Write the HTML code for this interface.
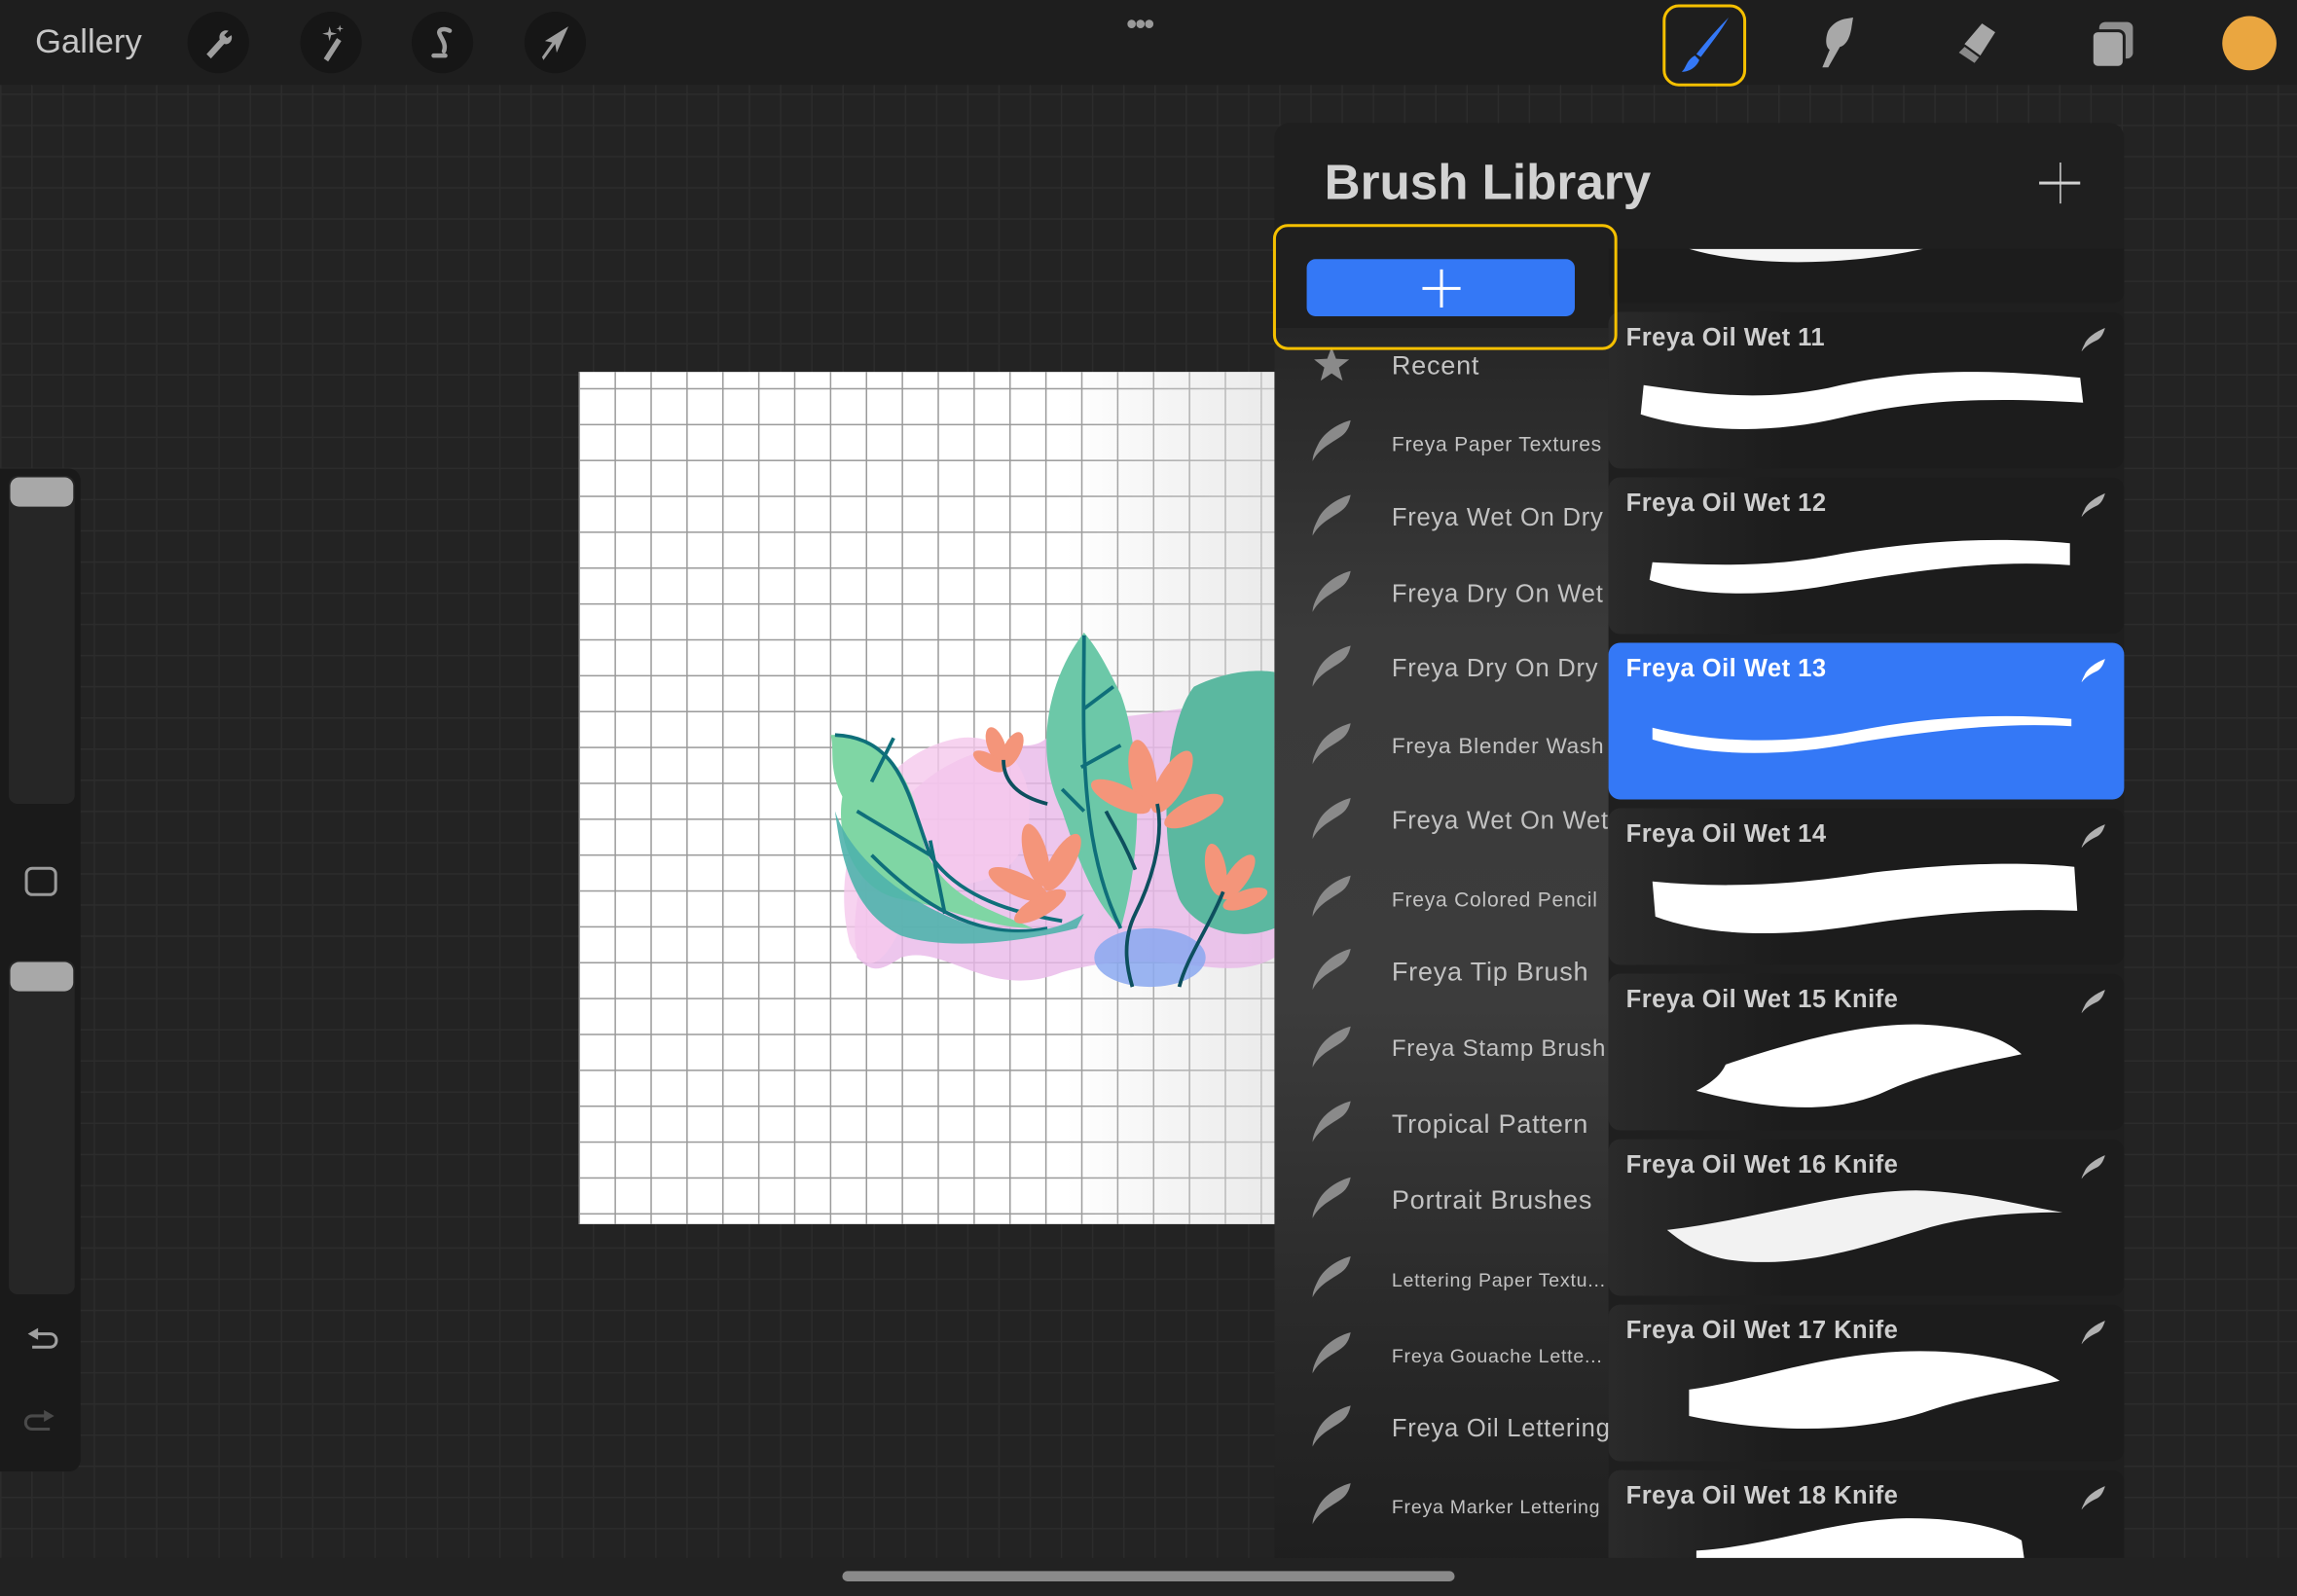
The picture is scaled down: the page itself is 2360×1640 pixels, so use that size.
<!DOCTYPE html>
<html><head><meta charset="utf-8"><style>
*{margin:0;padding:0;box-sizing:border-box}
html,body{width:2360px;height:1640px;overflow:hidden;background:#232323}
#w{position:absolute;left:0;top:0;width:1568px;height:1090px;transform:scale(1.50510,1.50459);transform-origin:0 0;font-family:"Liberation Sans",sans-serif;
background-color:#232323;background-image:linear-gradient(#2c2c2c 1px,transparent 1px),linear-gradient(90deg,#2c2c2c 1px,transparent 1px);background-size:21.3px 21.3px;overflow:hidden}
.a{position:absolute}
#top{left:0;top:0;width:1568px;height:58px;background:#1e1e1e}
.circ{width:42px;height:42px;border-radius:50%;background:#161616;top:8px}
#canvas{left:395px;top:254px;width:475px;height:582px;background-color:#fff;
background-image:linear-gradient(90deg,rgba(255,255,255,0) 70%,rgba(220,220,220,.6)),linear-gradient(#9a9a9a 1px,transparent 1px),linear-gradient(90deg,#9a9a9a 1px,transparent 1px);background-size:100% 100%,24.5px 24.5px,24.5px 24.5px;background-position:0 0,0 11px,0 0}
#side{left:0;top:320px;width:55px;height:685px;background:#1a1a1a;border-radius:0 8px 8px 0}
.track{left:6px;width:45px;background:#262626;border-radius:6px}
.thumb{left:7px;width:43px;height:20px;background:#a8a8a8;border-radius:6px}
#panel{left:870px;top:84px;width:580px;height:980px;background:#1f1f1f;border-radius:10px 10px 0 0;overflow:hidden}
#list{left:0;top:140px;width:228px;height:840px;background:linear-gradient(180deg,#262626 0%,#3a3a3a 25%,#3c3c3c 55%,#2a2a2a 80%,#1f1f1f 100%)}
.li{position:absolute;left:80px;color:#c2c2c2;white-space:nowrap;transform:translateY(-50%);letter-spacing:.5px}
.card{position:absolute;left:228px;width:352px;height:107px;border-radius:8px;background:linear-gradient(90deg,#2a2a2a,#1c1c1c 35%,#1c1c1c)}
.card .t{position:absolute;left:12px;top:8px;font-weight:bold;font-size:17px;color:#cfcfcf;letter-spacing:.3px}
.card .f{position:absolute;right:12px;top:10px;width:18px;height:18px}
.card svg.s{position:absolute;left:0;top:0}
</style></head><body><div id="w">
<div id="top" class="a">
 <div class="a" style="left:24px;top:15px;font-size:23px;color:#c6c6c6">Gallery</div>
 <div class="a circ" style="left:128px"></div><div class="a circ" style="left:205px"></div><div class="a circ" style="left:281px"></div><div class="a circ" style="left:358px"></div>
 <svg class="a" style="left:128px;top:8px" width="42" height="42"><path d="M28 13 C24 12 21 15 22 19 L13 29 L16 32 L25 22 C29 23 31 19 30 16 L27 18 L25 16 Z" fill="#9e9e9e"/></svg>
 <svg class="a" style="left:205px;top:8px" width="42" height="42"><path d="M25 18 L28 20 L19 34 L16 32 Z" fill="#9e9e9e"/><path d="M20 10 L21 14 L25 15 L21 16 L20 20 L19 16 L15 15 L19 14Z M27 9 L27.6 11 L29.5 11.5 L27.6 12 L27 14 L26.4 12 L24.5 11.5 L26.4 11Z" fill="#9e9e9e"/></svg>
 <svg class="a" style="left:281px;top:8px" width="42" height="42"><path d="M26 13 C22 11 18 12 19 15 C20 18 24 22 22 27 M15 30 L23 30" stroke="#9e9e9e" stroke-width="3" fill="none" stroke-linecap="round"/></svg>
 <svg class="a" style="left:358px;top:8px" width="42" height="42"><path d="M30 10 L22 28 L21 22 L13 33 L12 31 L19 21 L14 20 Z" fill="#9e9e9e"/></svg>
 <div class="a" style="left:769px;top:6px;font-size:20px;color:#9a9a9a;letter-spacing:-1px;font-weight:bold">•••</div>
 <div class="a" style="left:1135px;top:3px;width:57px;height:56px;border:2.5px solid #f5c000;border-radius:11px"></div>
 <svg class="a" style="left:1135px;top:3px" width="57" height="56"><path d="M45 9 C40 18 32 28 26 36 L23 34 C30 25 38 16 45 9Z" fill="#3478f6"/><path d="M22 35 L25 38 C23 43 18 46 13 46 C16 44 16 38 22 35Z" fill="#3478f6"/></svg>
 <svg class="a" style="left:1232px;top:8px" width="50" height="44"><path d="M27 5 L33 4 L32 10 C31 18 28 23 24 24 L16 38 L12 38 L17 26 C14 24 14 18 16 13 C19 8 23 6 27 5Z" fill="#a8a8a8"/></svg>
 <svg class="a" style="left:1326px;top:8px" width="50" height="44"><path d="M22 36 L10 28 L27 8 L36 14 Z" fill="#a8a8a8"/><path d="M10 28 L15 23 L26 31 L22 36Z" fill="#8a8a8a" stroke="#1e1e1e" stroke-width="1.5"/></svg>
 <svg class="a" style="left:1420px;top:8px" width="50" height="44"><rect x="13" y="7" width="23" height="25" rx="4" fill="#8e8e8e"/><rect x="8" y="13" width="22" height="25" rx="4" fill="#a8a8a8" stroke="#1e1e1e" stroke-width="2"/></svg>
 <div class="a" style="left:1517px;top:11px;width:37px;height:37px;border-radius:50%;background:#eaa640"></div>
</div>

<div id="side" class="a">
 <div class="a track" style="top:5px;height:224px"></div><div class="a thumb" style="top:6px"></div>
 <div class="a" style="left:17px;top:272px;width:22px;height:20px;border:2px solid #9a9a9a;border-radius:5px"></div>
 <div class="a track" style="top:336px;height:228px"></div><div class="a thumb" style="top:337px"></div>
 <svg class="a" style="left:14px;top:584px" width="28" height="24"><path d="M5 7 L12 3 L12 11 Z" fill="#a0a0a0"/><path d="M11 7 L20 7 C26 7 26 16 20 16 L8 16" stroke="#a0a0a0" stroke-width="2" fill="none"/></svg>
 <svg class="a" style="left:14px;top:640px" width="28" height="24"><path d="M23 7 L16 3 L16 11 Z" fill="#4a4a4a"/><path d="M17 7 L8 7 C2 7 2 16 8 16 L20 16" stroke="#4a4a4a" stroke-width="2" fill="none"/></svg>
</div>

<div id="canvas" class="a">
<svg width="475" height="582" style="position:absolute;left:0;top:0">
 <path d="M190 400 C180 340 220 260 300 255 C330 258 320 230 350 235 C380 240 430 220 475 230 L475 400 C440 420 400 390 330 410 C280 430 250 390 220 400 C205 410 200 410 190 400Z" fill="#e8b8e8" opacity=".8"/>
 <path d="M185 390 C170 330 200 260 260 250 C300 245 320 290 300 330 C280 360 240 340 220 380 C205 410 195 410 185 390Z" fill="#f5c8ec" opacity=".8"/>
 <path d="M172 248 C210 245 230 280 235 320 C245 360 290 370 310 380 C280 380 250 365 220 360 C190 355 175 320 180 290 C170 270 175 258 172 248Z" fill="#7fd6a4"/>
 <path d="M175 248 C220 250 225 290 240 330 C260 360 300 370 330 375 M200 280 L215 250 M190 300 L240 330" stroke="#0f6f7a" stroke-width="2.5" fill="none"/>
 <path d="M345 178 C320 210 310 260 330 300 C340 330 350 360 370 380 C385 330 385 260 370 220 C360 200 355 190 345 178Z" fill="#6cc8a8"/>
 <path d="M345 180 C345 240 340 320 370 380 M345 230 L365 215 M343 270 L370 255 M345 300 L330 285" stroke="#0f6f7a" stroke-width="2.5" fill="none"/>
 <path d="M420 215 C450 200 475 205 475 205 L475 380 C450 390 420 380 410 360 C395 320 400 240 420 215Z" fill="#5bb8a0"/>
 <path d="M200 330 C230 360 270 390 320 380 M240 320 L250 370" stroke="#0f6f7a" stroke-width="2.5" fill="none"/>
 <path d="M175 300 C185 330 220 360 260 375 C300 390 330 380 345 370 L340 380 C300 390 250 395 220 385 C190 370 180 340 175 300Z" fill="#4fb3ac" opacity=".9"/>
 <ellipse cx="390" cy="400" rx="38" ry="20" fill="#8aa8f0" opacity=".85"/>
 <g fill="#f4957a">
  <ellipse cx="285" cy="255" rx="6" ry="13" transform="rotate(-20 285 255)"/><ellipse cx="296" cy="258" rx="6" ry="13" transform="rotate(25 296 258)"/><ellipse cx="280" cy="266" rx="5" ry="12" transform="rotate(-60 280 266)"/>
  <ellipse cx="312" cy="330" rx="8" ry="22" transform="rotate(-15 312 330)"/><ellipse cx="330" cy="335" rx="8" ry="22" transform="rotate(30 330 335)"/><ellipse cx="300" cy="350" rx="8" ry="22" transform="rotate(-65 300 350)"/><ellipse cx="315" cy="365" rx="7" ry="20" transform="rotate(-120 315 365)"/>
  <ellipse cx="385" cy="275" rx="9" ry="24" transform="rotate(-10 385 275)"/><ellipse cx="405" cy="280" rx="9" ry="24" transform="rotate(30 405 280)"/><ellipse cx="370" cy="290" rx="8" ry="22" transform="rotate(-65 370 290)"/><ellipse cx="420" cy="300" rx="8" ry="22" transform="rotate(65 420 300)"/>
  <ellipse cx="435" cy="340" rx="7" ry="18" transform="rotate(-10 435 340)"/><ellipse cx="450" cy="345" rx="7" ry="18" transform="rotate(35 450 345)"/><ellipse cx="455" cy="360" rx="6" ry="16" transform="rotate(70 455 360)"/>
 </g>
 <path d="M395 295 C400 320 390 350 380 370 C370 390 375 410 378 420 M380 340 C372 320 365 310 360 300 M440 355 C430 380 415 400 410 420 M290 265 C290 280 300 290 320 295" stroke="#0d4f5e" stroke-width="2.5" fill="none"/>
</svg>
</div>

<div id="panel" class="a">
 <div id="list" class="a">
  <svg class="a" style="left:26px;top:12px" width="26" height="26"><path d="M13 1 L16 9 L25 9.5 L18 15 L20.5 24 L13 19 L5.5 24 L8 15 L1 9.5 L10 9 Z" fill="#8a8a8a"/></svg>
 </div>
 <div class="card" style="top:86px;height:37px;border-radius:0 0 8px 8px;background:#1c1c1c">
  <svg class="s" width="352" height="37"><path d="M55 0 C95 12 160 12 215 0 Z" fill="#f5f5f5"/></svg>
 </div>
 <div class="a" style="left:34px;top:22px;font-size:34px;font-weight:bold;color:#d2d2d2">Brush Library</div>
 <div class="a" style="left:522px;top:40px;width:28px;height:1.5px;background:#d0d0d0"></div>
 <div class="a" style="left:535.5px;top:27px;width:1.5px;height:28px;background:#d0d0d0"></div>
</div>

<div class="a" style="left:870px;top:0;width:228px;height:1090px">
 <div class="li" style="top:250px;font-size:18px">Recent</div>
 <div class="li" style="top:303px;font-size:14px">Freya Paper Textures</div>
 <div class="li" style="top:354px;font-size:17px">Freya Wet On Dry</div>
 <div class="li" style="top:406px;font-size:17px">Freya Dry On Wet</div>
 <div class="li" style="top:457px;font-size:17px">Freya Dry On Dry</div>
 <div class="li" style="top:510px;font-size:15px">Freya Blender Wash</div>
 <div class="li" style="top:561px;font-size:17px">Freya Wet On Wet</div>
 <div class="li" style="top:614px;font-size:14px">Freya Colored Pencil</div>
 <div class="li" style="top:664px;font-size:18px">Freya Tip Brush</div>
 <div class="li" style="top:717px;font-size:16px">Freya Stamp Brush</div>
 <div class="li" style="top:768px;font-size:18px">Tropical Pattern</div>
 <div class="li" style="top:820px;font-size:18px">Portrait Brushes</div>
 <div class="li" style="top:874px;font-size:13px">Lettering Paper Textu...</div>
 <div class="li" style="top:926px;font-size:13px">Freya Gouache Lette...</div>
 <div class="li" style="top:976px;font-size:17px">Freya Oil Lettering</div>
 <div class="li" style="top:1029px;font-size:13px">Freya Marker Lettering</div>
 <svg width="60" height="1090" style="position:absolute;left:0;top:0">
  <defs><path id="fth" d="M28 2 C20 4 10 10 6 18 C4 22 2 26 2 30 C6 22 14 18 20 14 C25 11 27 7 28 2Z" fill="#8a8a8a"/></defs>
  <use href="#fth" x="24" y="285"/><use href="#fth" x="24" y="336"/><use href="#fth" x="24" y="388"/><use href="#fth" x="24" y="439"/><use href="#fth" x="24" y="492"/><use href="#fth" x="24" y="543"/><use href="#fth" x="24" y="596"/><use href="#fth" x="24" y="646"/><use href="#fth" x="24" y="699"/><use href="#fth" x="24" y="750"/><use href="#fth" x="24" y="802"/><use href="#fth" x="24" y="856"/><use href="#fth" x="24" y="908"/><use href="#fth" x="24" y="958"/><use href="#fth" x="24" y="1011"/>
 </svg>
</div>

<div class="a" style="left:870px;top:0;width:580px;height:1090px">
 <svg width="0" height="0" style="position:absolute"><defs><path id="ff" d="M17 1 C12 3 5 7 3 12 C2 14 1 16 1 17 C4 13 8 11 12 9 C15 7 16 4 17 1Z"/></defs></svg>
 <div class="card" style="top:213px"><div class="t">Freya Oil Wet 11</div><svg class="f"><use href="#ff" fill="#b0b0b0"/></svg>
  <svg class="s" width="352" height="107"><path d="M24 50 C60 55 100 62 150 52 C200 40 250 38 322 45 L324 62 C260 58 210 60 160 72 C110 84 60 82 22 70Z" fill="#fff"/></svg></div>
 <div class="card" style="top:326px"><div class="t">Freya Oil Wet 12</div><svg class="f"><use href="#ff" fill="#b0b0b0"/></svg>
  <svg class="s" width="352" height="107"><path d="M30 58 C70 60 110 62 160 52 C210 44 260 40 315 45 L315 60 C260 56 210 64 160 72 C110 82 60 82 28 70Z" fill="#fff"/></svg></div>
 <div class="card" style="top:439px;background:#3478f6"><div class="t" style="color:#fff">Freya Oil Wet 13</div><svg class="f"><use href="#ff" fill="#fff"/></svg>
  <svg class="s" width="352" height="107"><path d="M30 58 C70 68 120 70 170 60 C220 50 270 48 316 52 L316 57 C270 54 220 60 170 68 C120 78 70 78 30 66Z" fill="#fff"/></svg></div>
 <div class="card" style="top:552px"><div class="t">Freya Oil Wet 14</div><svg class="f"><use href="#ff" fill="#b0b0b0"/></svg>
  <svg class="s" width="352" height="107"><path d="M30 50 C80 55 130 52 180 44 C230 38 280 36 318 40 L320 70 C270 68 220 72 170 80 C120 88 70 88 32 74 Z" fill="#fff"/></svg></div>
 <div class="card" style="top:665px"><div class="t">Freya Oil Wet 15 Knife</div><svg class="f"><use href="#ff" fill="#b0b0b0"/></svg>
  <svg class="s" width="352" height="107"><path d="M80 62 C130 45 180 32 220 35 C250 37 270 44 282 55 C260 60 220 66 190 80 C160 94 120 96 60 80 C75 72 78 66 80 62Z" fill="#fff"/></svg></div>
 <div class="card" style="top:778px"><div class="t">Freya Oil Wet 16 Knife</div><svg class="f"><use href="#ff" fill="#b0b0b0"/></svg>
  <svg class="s" width="352" height="107"><path d="M40 62 C100 55 160 35 210 35 C250 36 280 45 310 50 C280 50 250 52 220 60 C180 72 130 90 80 82 C60 78 50 70 40 62Z" fill="#f2f2f2"/></svg></div>
 <div class="card" style="top:891px"><div class="t">Freya Oil Wet 17 Knife</div><svg class="f"><use href="#ff" fill="#b0b0b0"/></svg>
  <svg class="s" width="352" height="107"><path d="M55 58 C100 52 140 35 200 32 C250 30 290 40 308 52 C280 58 250 62 220 72 C180 86 120 90 55 76 Z" fill="#fff"/></svg></div>
 <div class="card" style="top:1004px;height:70px"><div class="t">Freya Oil Wet 18 Knife</div><svg class="f"><use href="#ff" fill="#b0b0b0"/></svg>
  <svg class="s" width="352" height="70"><path d="M60 55 C110 52 150 35 200 33 C240 32 270 40 282 48 L284 62 L60 62Z" fill="#fff"/></svg></div>
</div>

<div class="a" style="left:869px;top:153px;width:235px;height:86px;border:2.5px solid #f5c000;border-radius:10px"></div>
<div class="a" style="left:892px;top:177px;width:183px;height:39px;background:#3478f6;border-radius:6px"></div>
<div class="a" style="left:971px;top:196px;width:26px;height:1.5px;background:#fff"></div>
<div class="a" style="left:983px;top:184px;width:1.5px;height:26px;background:#fff"></div>

<div class="a" style="left:0;top:1064px;width:1568px;height:26px;background:#222"></div>
<div class="a" style="left:575px;top:1073px;width:418px;height:7px;border-radius:4px;background:#8a8a8a"></div>
</div></body></html>
